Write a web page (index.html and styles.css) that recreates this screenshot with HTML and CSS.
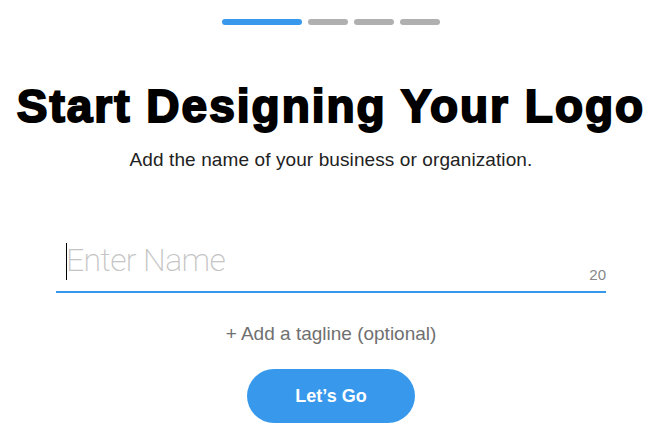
FILE: index.html
```html
<!DOCTYPE html>
<html lang="en">
<head>
    <meta charset="UTF-8">
    <meta name="viewport" content="width=device-width, initial-scale=1.0">
    <title>Start Designing Your Logo</title>
    <link rel="stylesheet" href="styles.css">
</head>
<body>
    <div class="page">
        <div class="steps">
            <span class="step active"></span>
            <span class="step"></span>
            <span class="step"></span>
            <span class="step"></span>
        </div>

        <h1>Start Designing Your Logo</h1>
        <p class="subtitle">Add the name of your business or organization.</p>

        <div class="name-field">
            <span class="caret"></span>
            <input type="text" id="name" placeholder="Enter Name" maxlength="20">
            <span class="counter">20</span>
        </div>

        <a class="tagline" href="#">+ Add a tagline (optional)</a>

        <button class="go-btn">Let’s Go</button>
    </div>
</body>
</html>
```

FILE: styles.css
```css
body {
    margin: 0;
    font-family: "Liberation Sans", Arial, sans-serif;
    background-color: #fff;
}

.page {
    width: 662px;
    display: flex;
    flex-direction: column;
    align-items: center;
}

.steps {
    display: flex;
    gap: 6px;
    margin-top: 19px;
}

.step {
    display: block;
    width: 40px;
    height: 6px;
    border-radius: 3px;
    background-color: #b0b0b0;
}

.step.active {
    width: 80px;
    background-color: #3899ec;
}

h1 {
    margin: 54px 0 0;
    font-size: 46px;
    line-height: 54px;
    font-weight: bold;
    color: #000;
    -webkit-text-stroke: 2px #000;
    letter-spacing: 2px;
    white-space: nowrap;
}

.subtitle {
    margin: 16px 0 0;
    font-size: 19px;
    line-height: 22px;
    color: #222;
    letter-spacing: 0.1px;
}

.name-field {
    position: relative;
    width: 550px;
    margin-top: 68px;
    border-bottom: 2px solid #3899ec;
    display: flex;
    align-items: flex-end;
}

.name-field input {
    flex: 1;
    border: none;
    outline: none;
    padding: 0 0 10px 10px;
    font-family: Roboto, "Liberation Sans", sans-serif;
    font-weight: 200;
    font-size: 32px;
    letter-spacing: -0.6px;
    line-height: 42px;
    color: #333;
    background: transparent;
}

.name-field input::placeholder {
    color: #c4c4c4;
}

.caret {
    position: absolute;
    left: 10px;
    top: 4px;
    width: 1px;
    height: 37px;
    background-color: #000;
}

.counter {
    padding-bottom: 8px;
    font-size: 15px;
    color: #888;
}

.tagline {
    margin-top: 30px;
    font-size: 19px;
    color: #707070;
    text-decoration: none;
}

.go-btn {
    margin-top: 24px;
    width: 168px;
    height: 54px;
    border: none;
    border-radius: 27px;
    background-color: #3899ec;
    color: #fff;
    font-family: "Liberation Sans", Arial, sans-serif;
    font-size: 18px;
    font-weight: bold;
    cursor: pointer;
}
```
